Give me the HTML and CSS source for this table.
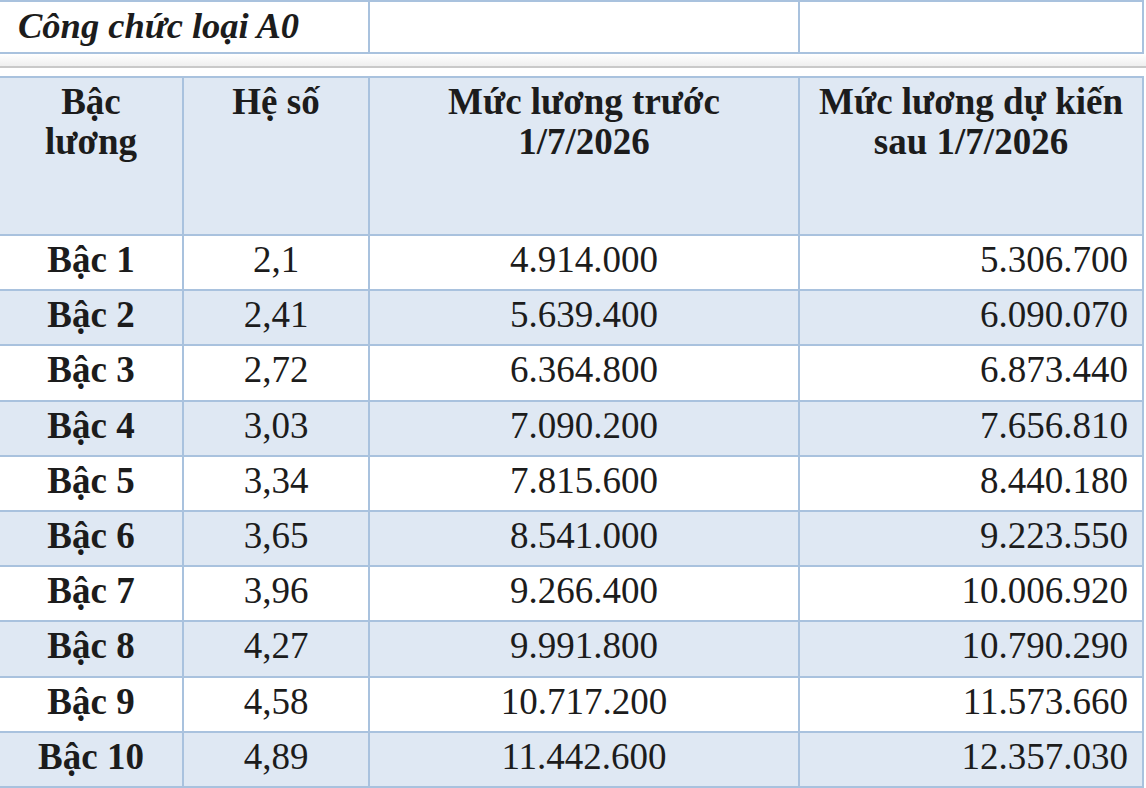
FILE: index.html
```html
<!DOCTYPE html>
<html lang="vi">
<head>
<meta charset="utf-8">
<title>Công chức loại A0</title>
<link rel="stylesheet" href="styles.css">
</head>
<body>
<div class="page">
  <table class="title-table">
    <colgroup><col class="c-a"><col class="c-b"><col class="c-c"></colgroup>
    <tr>
      <td class="title-cell">Công chức loại A0</td>
      <td></td>
      <td></td>
    </tr>
  </table>
  <div class="separator"></div>
  <table class="salary">
    <colgroup><col class="c1"><col class="c2"><col class="c3"><col class="c4"></colgroup>
    <thead>
      <tr class="head">
        <th>Bậc<br>lương</th>
        <th>Hệ số</th>
        <th>Mức lương trước<br>1/7/2026</th>
        <th>Mức lương dự kiến<br>sau 1/7/2026</th>
      </tr>
    </thead>
    <tbody>
      <tr><td class="rank">Bậc 1</td><td class="mid">2,1</td><td class="mid">4.914.000</td><td class="num">5.306.700</td></tr>
      <tr class="alt"><td class="rank">Bậc 2</td><td class="mid">2,41</td><td class="mid">5.639.400</td><td class="num">6.090.070</td></tr>
      <tr><td class="rank">Bậc 3</td><td class="mid">2,72</td><td class="mid">6.364.800</td><td class="num">6.873.440</td></tr>
      <tr class="alt"><td class="rank">Bậc 4</td><td class="mid">3,03</td><td class="mid">7.090.200</td><td class="num">7.656.810</td></tr>
      <tr><td class="rank">Bậc 5</td><td class="mid">3,34</td><td class="mid">7.815.600</td><td class="num">8.440.180</td></tr>
      <tr class="alt"><td class="rank">Bậc 6</td><td class="mid">3,65</td><td class="mid">8.541.000</td><td class="num">9.223.550</td></tr>
      <tr><td class="rank">Bậc 7</td><td class="mid">3,96</td><td class="mid">9.266.400</td><td class="num">10.006.920</td></tr>
      <tr class="alt"><td class="rank">Bậc 8</td><td class="mid">4,27</td><td class="mid">9.991.800</td><td class="num">10.790.290</td></tr>
      <tr><td class="rank">Bậc 9</td><td class="mid">4,58</td><td class="mid">10.717.200</td><td class="num">11.573.660</td></tr>
      <tr class="alt"><td class="rank">Bậc 10</td><td class="mid">4,89</td><td class="mid">11.442.600</td><td class="num">12.357.030</td></tr>
    </tbody>
  </table>
</div>
</body>
</html>
```

FILE: styles.css
```css
html, body {
  margin: 0;
  padding: 0;
  background: #ffffff;
}

body {
  font-family: "Liberation Serif", "Times New Roman", serif;
  color: #1c1c1c;
  width: 1146px;
  height: 788px;
  overflow: hidden;
}

.page {
  width: 1146px;
}

table {
  border-collapse: separate;
  border-spacing: 0;
  table-layout: fixed;
  width: 1144px;
  border-top: 2px solid #a9c2de;
}

td, th {
  box-sizing: border-box;
  border-right: 2px solid #a9c2de;
  border-bottom: 2px solid #a9c2de;
  padding: 0;
}

/* top title row */
.c-a { width: 370px; }
.c-b { width: 430px; }
.c-c { width: 344px; }

.title-table td {
  height: 52px;
  background: #ffffff;
}

.title-cell {
  font-size: 36.5px;
  font-weight: bold;
  font-style: italic;
  padding: 0 0 2px 18px !important;
  line-height: 46px;
  white-space: nowrap;
}

.separator {
  height: 12px;
  background: linear-gradient(#ffffff, #efefef);
  border-bottom: 2px solid #c9c9c9;
  margin-bottom: 8px;
}

/* salary table */
.c1 { width: 184px; }
.c2 { width: 186px; }
.c3 { width: 430px; }
.c4 { width: 344px; }

.salary th {
  background: #dfe8f3;
  font-size: 37px;
  font-weight: bold;
  line-height: 40px;
  text-align: center;
  vertical-align: top;
  padding-top: 4px;
  height: 158px;
}

.salary td {
  height: 55.2px;
  font-size: 37px;
  line-height: 40px;
  background: #ffffff;
  vertical-align: middle;
  padding-bottom: 5px;
}

.salary tr.alt td {
  background: #dfe8f3;
}

.rank {
  font-weight: bold;
  text-align: center;
}

.mid {
  text-align: center;
}

.num {
  text-align: right;
  padding-right: 14px !important;
}
```
